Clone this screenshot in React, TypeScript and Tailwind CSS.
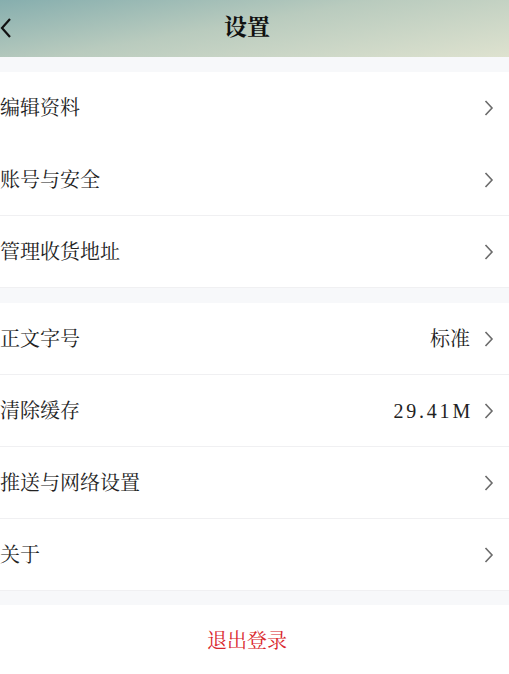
import React from 'react';

const font = { fontFamily: '"Liberation Serif", "Noto Serif CJK SC", "Noto Sans CJK SC", serif' };

function Chevron() {
  return (
    <svg width="10" height="18" viewBox="0 0 10 18" fill="none" className="shrink-0">
      <path d="M1.5 2 L8 9 L1.5 16" stroke="#6b6b6b" strokeWidth="1.6" />
    </svg>
  );
}

interface RowProps {
  label: string;
  value?: string;
  wide?: boolean;
  border?: boolean;
}

function Row({ label, value, wide, border }: RowProps) {
  return (
    <div className={`h-[72px] flex items-center justify-between pr-[15px] bg-white ${border ? 'border-b border-[#f0f0f2]' : ''}`}>
      <span className="text-[20px] text-[#222]">{label}</span>
      <div className="flex items-center gap-[14px]">
        {value && (
          <span className={`text-[20px] text-[#222] ${wide ? 'tracking-[2.8px] -mr-[3px]' : ''}`}>{value}</span>
        )}
        <Chevron />
      </div>
    </div>
  );
}

export default function App() {
  return (
    <div className="w-[509px] h-[674px] bg-white overflow-hidden" style={font}>
      {/* Header */}
      <div className="h-[57px] relative flex items-center justify-center pr-[15px] bg-[linear-gradient(170deg,#86aeae_0%,#b9cbbe_45%,#dee2cf_100%)]">
        <svg width="14" height="22" viewBox="0 0 14 22" fill="none" className="absolute left-0 top-[17px]">
          <path d="M10 2 L2 11 L10 20" stroke="#111" strokeWidth="2.2" />
        </svg>
        <span className="text-[23px] font-bold text-[#111]">设置</span>
      </div>

      <div className="h-[15px] bg-[#f7f8fa]" />
      <Row label="编辑资料" />
      <Row label="账号与安全" border />
      <Row label="管理收货地址" border />

      <div className="h-[15px] bg-[#f7f8fa]" />
      <Row label="正文字号" value="标准" border />
      <Row label="清除缓存" value="29.41M" wide border />
      <Row label="推送与网络设置" border />
      <Row label="关于" border />

      <div className="h-[14px] bg-[#f7f8fa]" />
      <div className="h-[71px] flex items-center justify-center pr-[15px] bg-white">
        <span className="text-[20px] text-[#d9262c]">退出登录</span>
      </div>
    </div>
  );
}
